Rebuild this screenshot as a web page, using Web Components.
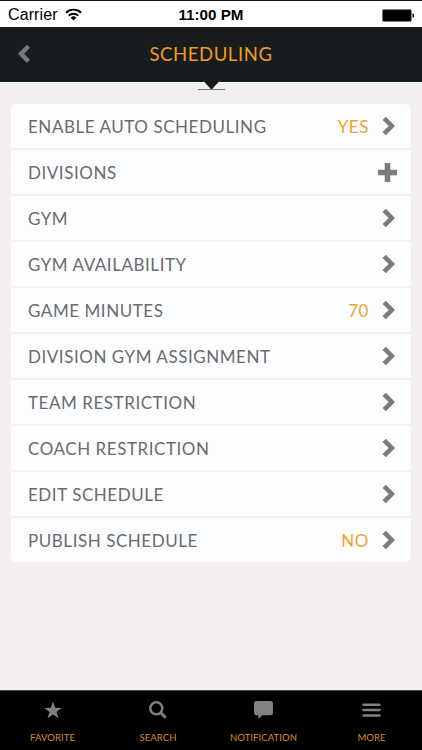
<!DOCTYPE html>
<html lang="en">
<head>
<meta charset="utf-8">
<title>Scheduling</title>
<style>
body {
  margin: 0;
  background: #f3efee;
  font-family: Lato, "Liberation Sans", sans-serif;
}
</style>
</head>
<body>
<app-screen>
  <status-bar slot="top" carrier="Carrier" time="11:00 PM"></status-bar>
  <nav-header slot="top">SCHEDULING</nav-header>
  <setting-list>
    <setting-row value="YES" icon="chevron">ENABLE AUTO SCHEDULING</setting-row>
    <setting-row icon="plus">DIVISIONS</setting-row>
    <setting-row icon="chevron">GYM</setting-row>
    <setting-row icon="chevron">GYM AVAILABILITY</setting-row>
    <setting-row value="70" icon="chevron">GAME MINUTES</setting-row>
    <setting-row icon="chevron">DIVISION GYM ASSIGNMENT</setting-row>
    <setting-row icon="chevron">TEAM RESTRICTION</setting-row>
    <setting-row icon="chevron">COACH RESTRICTION</setting-row>
    <setting-row icon="chevron">EDIT SCHEDULE</setting-row>
    <setting-row value="NO" icon="chevron">PUBLISH SCHEDULE</setting-row>
  </setting-list>
  <tab-bar slot="bottom">
    <tab-item icon="star">FAVORITE</tab-item>
    <tab-item icon="search">SEARCH</tab-item>
    <tab-item icon="bubble">NOTIFICATION</tab-item>
    <tab-item icon="menu">MORE</tab-item>
  </tab-bar>
</app-screen>

<script>
const ICONS = {
  chevron: `<svg width="14" height="20" viewBox="0 0 14 20"><path d="M2.2 2.3 9.8 10 2.2 17.7" fill="none" stroke="#7b7c7e" stroke-width="4.6"/></svg>`,
  plus: `<svg width="19" height="19" viewBox="0 0 19 19"><path d="M6.7 0h5.6v6.7H19v5.6h-6.7V19H6.7v-6.7H0V6.7h6.7z" fill="#7b7c7e"/></svg>`,
  star: `<svg width="18" height="18" viewBox="0 0 18 18"><path d="M9 .5 11.2 6.8 17.8 6.9 12.5 10.9 14.5 17.2 9 13.5 3.5 17.2 5.5 10.9.2 6.9 6.8 6.8z" fill="#808184"/></svg>`,
  search: `<svg width="18" height="18" viewBox="0 0 18 18"><circle cx="7.3" cy="7.3" r="6" fill="none" stroke="#808184" stroke-width="2.4"/><path d="M11.5 11.5 16.7 16.7" stroke="#808184" stroke-width="3"/></svg>`,
  bubble: `<svg width="19" height="18" viewBox="0 0 19 18"><path d="M2.5 0h14A2.5 2.5 0 0 1 19 2.5v9.2a2.5 2.5 0 0 1-2.5 2.5H8.3L4.3 18v-3.8H2.5A2.5 2.5 0 0 1 0 11.7V2.5A2.5 2.5 0 0 1 2.5 0z" fill="#808184"/></svg>`,
  menu: `<svg width="19" height="18" viewBox="0 0 19 18"><path d="M1.5 3.7h16M1.5 9h16M1.5 14.5h16" stroke="#808184" stroke-width="2.5" stroke-linecap="round"/></svg>`
};

class AppScreen extends HTMLElement {
  constructor() {
    super();
    this.attachShadow({ mode: "open" });
  }
  connectedCallback() {
    this.shadowRoot.innerHTML = `
<style>
:host {
  display: flex;
  flex-direction: column;
  height: 750px;
  overflow: hidden;
}
main {
  flex: 1;
  padding: 21px 11px 0;
}
</style>
<slot name="top"></slot>
<main><slot></slot></main>
<slot name="bottom"></slot>
    `
  }
}

class StatusBar extends HTMLElement {
  constructor() {
    super();
    this.attachShadow({ mode: "open" });
  }
  connectedCallback() {
    this.shadowRoot.innerHTML = `
<style>
:host {
  display: grid;
  grid-template-columns: 1fr auto 1fr;
  align-items: center;
  box-sizing: border-box;
  height: 27px;
  padding: 2px 8px 0;
  border-top: 1px solid #111;
  background: #fff;
  color: #000;
  font: 16px/24px "Liberation Sans", Arial, sans-serif;
}
.left {
  display: flex;
  align-items: center;
  gap: 7px;
}
.carrier {
  letter-spacing: 0.1px;
}
.time {
  font-size: 15.2px;
  font-weight: 700;
}
.battery {
  justify-self: end;
}
svg {
  display: block;
}
.wifi {
  margin-top: -2px;
}
</style>
<div class="left">
  <span class="carrier">${this.getAttribute('carrier')}</span>
  <svg class="wifi" width="17" height="13" viewBox="0 0 17 13">
    <path d="M.9 4.7a11 11 0 0 1 15.2 0M3.7 7.6a7 7 0 0 1 9.6 0" fill="none" stroke="#000" stroke-width="1.9"/>
    <path d="M5.7 9.7a4 4 0 0 1 5.6 0L8.5 12.4z"/>
  </svg>
</div>
<span class="time">${this.getAttribute('time')}</span>
<svg class="battery" width="32" height="13" viewBox="0 0 32 13">
  <rect x=".4" y=".4" width="29" height="12.2" rx="1.5" stroke="#777" stroke-width=".6"/>
  <path d="M30.5 4.5a2 2 0 0 1 0 4z"/>
</svg>
    `
  }
}

class NavHeader extends HTMLElement {
  constructor() {
    super();
    this.attachShadow({ mode: "open" });
  }
  connectedCallback() {
    this.shadowRoot.innerHTML = `
<style>
:host {
  display: grid;
  grid-template-columns: 50px 1fr 50px;
  align-items: center;
  position: relative;
  height: 53px;
  padding-bottom: 2px;
  background: #191c1f;
  border-bottom: 1px solid #fbf9f9;
}
.back {
  display: block;
  margin-left: 17px;
}
.title {
  color: #f09d1c;
  font-size: 18.5px;
  line-height: 24px;
  letter-spacing: .6px;
  text-align: center;
}
/* pointer hanging below the header */
.notch {
  position: absolute;
  left: 198px;
  top: 54px;
}
</style>
<svg class="back" width="14" height="20" viewBox="0 0 14 20"><path d="M11.5 2.2 4 9.8 11.5 17.4" fill="none" stroke="#77797b" stroke-width="4.4"/></svg>
<span class="title"><slot></slot></span>
<svg class="notch" width="28" height="10" viewBox="0 0 28 10">
  <path d="M0 8.5h27" stroke="#77797b" stroke-width="1"/>
  <path d="M5.5 0 13.5 8.7 21.5 0" fill="#191c1f" stroke="#fff" stroke-width=".8"/>
  <path d="M5.5 0h16v1h-16zM6.5 1h14l-7 7.8z" fill="#191c1f"/>
</svg>
    `
  }
}

class SettingList extends HTMLElement {
  constructor() {
    super();
    this.attachShadow({ mode: "open" });
  }
  connectedCallback() {
    this.shadowRoot.innerHTML = `
<style>
:host {
  display: grid;
  grid-auto-rows: 46px;
  height: 458px;
  border-radius: 5px;
  overflow: hidden;
  background: #fcfdff;
}
</style>
<slot></slot>
    `
  }
}

class SettingRow extends HTMLElement {
  constructor() {
    super();
    this.attachShadow({ mode: "open" });
  }
  connectedCallback() {
    const value = this.getAttribute('value')
    const icon = this.getAttribute('icon')
    this.shadowRoot.innerHTML = `
<style>
:host {
  display: flex;
  align-items: center;
  box-sizing: border-box;
  padding: 0 14px 0 17px;
  border-bottom: 2px solid #f2f2f4;
  font-size: 17px;
  line-height: 24px;
  letter-spacing: .55px;
  color: #6a6b6d;
}
:host(:last-child) {
  border-bottom-color: transparent;
}
.label {
  flex: 1;
  padding-top: 2px;
}
.value {
  color: #f4a02b;
  margin-right: 13px;
  padding-top: 2px;
}
.icon {
  display: flex;
}
.chevron {
  margin-right: 1px;
}
</style>
<span class="label"><slot></slot></span>
${value ? `<span class="value">${value}</span>` : ''}
<span class="icon ${icon}">${ICONS[icon]}</span>
    `
  }
}

class TabBar extends HTMLElement {
  constructor() {
    super();
    this.attachShadow({ mode: "open" });
  }
  connectedCallback() {
    this.shadowRoot.innerHTML = `
<style>
:host {
  display: grid;
  grid-template-columns: 105px 106px 105px 1fr;
  box-sizing: border-box;
  height: 60px;
  padding-right: 1px;
  background: #000;
  border-top: 1px solid #4b4b4b;
}
::slotted(:last-child) {
  padding-left: 6px;
}
</style>
<slot></slot>
    `
  }
}

class TabItem extends HTMLElement {
  constructor() {
    super();
    this.attachShadow({ mode: "open" });
  }
  connectedCallback() {
    this.shadowRoot.innerHTML = `
<style>
:host {
  display: flex;
  flex-direction: column;
  align-items: center;
  gap: 11px;
  padding-top: 10px;
  font-size: 9.5px;
  line-height: 16px;
  letter-spacing: .08px;
  color: #d98d1d;
}
svg {
  display: block;
}
</style>
${ICONS[this.getAttribute('icon')]}
<span><slot></slot></span>
    `
  }
}

customElements.define('app-screen', AppScreen);
customElements.define('status-bar', StatusBar);
customElements.define('nav-header', NavHeader);
customElements.define('setting-list', SettingList);
customElements.define('setting-row', SettingRow);
customElements.define('tab-bar', TabBar);
customElements.define('tab-item', TabItem);
</script>
</body>
</html>
